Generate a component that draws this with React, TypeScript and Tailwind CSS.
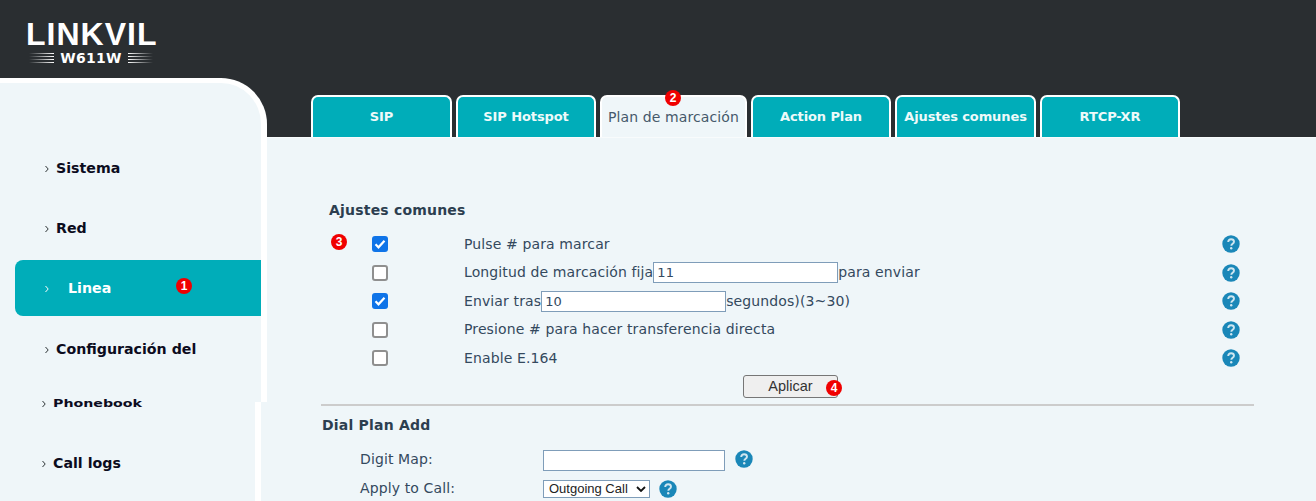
import React from 'react';

const font = 'font-["DejaVu_Sans",sans-serif]';

const Badge = ({ n, className }: { n: number; className: string }) => (
  <span className={`absolute z-10 flex h-[16px] w-[16px] items-center justify-center rounded-full bg-[#f00000] font-["Liberation_Sans",sans-serif] text-[12px] font-bold leading-none text-white ${className}`}>
    {n}
  </span>
);

const Help = ({ className = '' }: { className?: string }) => (
  <svg viewBox="0 0 18 18" className={`h-[18px] w-[18px] ${className}`}>
    <circle cx="9" cy="9" r="8.7" fill="#1a87b8" />
    <path d="M6.2 7c0-1.8 1.2-2.8 2.9-2.8S12 5.200 12 6.700c0 2-2.700 2.100-2.700 4" fill="none" stroke="#cfe6f0" strokeWidth="1.900" />
    <circle cx="9.200" cy="13.300" r="1.200" fill="#cfe6f0" />
  </svg>
);

const Chevron = ({ className = 'text-[#2d3436]' }: { className?: string }) => (
  <svg viewBox="0 0 6 8" className={`h-[8px] w-[6px] shrink-0 ${className}`}>
    <path d="M1.500 1l2.700 3-2.700 3" fill="none" stroke="currentColor" strokeWidth="1" />
  </svg>
);

const NavItem = ({ label, className = '' }: { label: string; className?: string }) => (
  <div className={`flex h-[60px] items-center gap-[6px] pl-[44px] text-[14.200px] font-bold text-[#0c0c1e] ${className}`}>
    <Chevron />
    <span>{label}</span>
  </div>
);

const tabs = [
  { label: 'SIP', w: 'w-[141px]' },
  { label: 'SIP Hotspot', w: 'w-[140px]' },
  { label: 'Plan de marcación', w: 'w-[147px]', active: true },
  { label: 'Action Plan', w: 'w-[140px]' },
  { label: 'Ajustes comunes', w: 'w-[141px]' },
  { label: 'RTCP-XR', w: 'w-[140px]' },
];

const Check = ({ on }: { on?: boolean }) =>
  on ? (
    <span className="flex h-[16px] w-[16px] items-center justify-center rounded-[3px] bg-[#0f74e8]">
      <svg viewBox="0 0 16 16" className="h-[16px] w-[16px]">
        <path d="M3.500 8.300l3 3 6-6.500" fill="none" stroke="#fff" strokeWidth="2.200" />
      </svg>
    </span>
  ) : (
    <span className="block h-[16px] w-[16px] rounded-[3px] border-2 border-[#8f8f8f] bg-white" />
  );

const TextBox = ({ value = '', className = 'w-[185px]' }: { value?: string; className?: string }) => (
  <input
    readOnly
    value={value}
    className={`h-[21px] border border-[#7f9db9] bg-white pl-[3px] font-["DejaVu_Sans",sans-serif] text-[13px] text-[#34495e] outline-none ${className}`}
  />
);

const rows: { on?: boolean; content: React.ReactNode }[] = [
  { on: true, content: 'Pulse # para marcar' },
  {
    content: (
      <>
        Longitud de marcación fija
        <TextBox value="11" />
        para enviar
      </>
    ),
  },
  {
    on: true,
    content: (
      <>
        Enviar tras
        <TextBox value="10" />
        segundos)(3~30)
      </>
    ),
  },
  { content: 'Presione # para hacer transferencia directa' },
  { content: 'Enable E.164' },
];

export default function App() {
  return (
    <div className={`relative flex h-[501px] w-[1316px] overflow-hidden bg-[#2a2e31] ${font}`}>
      {/* Left column: logo and side menu */}
      <div className="flex w-[267px] shrink-0 flex-col">
        <div className="flex h-[78px] flex-col items-start pl-[26px] pt-[19px]">
          <div className='w-[130px] whitespace-nowrap font-["Liberation_Sans",sans-serif] text-[32px] font-bold leading-[30px] tracking-[1px] text-white'>
            LINKVIL
          </div>
          <div className="mt-[1px] flex w-[130px] items-center justify-center gap-[6px]">
            <Stripes dir="r" />
            <span className="text-[14px] font-bold leading-[16px] tracking-[0.300px] text-white">W611W</span>
            <Stripes dir="l" />
          </div>
        </div>

        <div className="h-[324px] overflow-hidden rounded-tr-[46px] border-r-[6px] border-t-[5px] border-white bg-[#eff6f9] pt-[56px]">
          <NavItem label="Sistema" />
          <NavItem label="Red" />
          <div className="my-[1px] ml-[15px] flex h-[56px] items-center rounded-l-[8px] bg-[#00adb9] pl-[29px] pt-[1px] text-[14.200px] font-bold text-white">
            <Chevron className="text-white" />
            <span className="ml-[18px]">Linea</span>
          </div>
          <NavItem label="Configuración del" className="mt-[4px]" />
        </div>

        <div className="flex-1 bg-[#eff6f9]">
          <div className="flex h-full w-[261px] flex-col border-r-[6px] border-white">
            <div className="-mt-[8px] flex h-[20px] items-center gap-[6px] pl-[41px] text-[14.200px] font-bold text-[#0c0c1e]">
              <Chevron />
              <span className="scale-y-[0.8]">Phonebook</span>
            </div>
            <div className="mt-[20px] flex h-[60px] items-center gap-[6px] pl-[41px] text-[14.200px] font-bold text-[#0c0c1e]">
              <Chevron />
              <span>Call logs</span>
            </div>
          </div>
        </div>
      </div>

      {/* Right column: tabs and settings */}
      <div className="flex min-w-0 flex-1 flex-col">
        <div className="flex h-[137px] items-end gap-[4px] pl-[44px]">
          {tabs.map((t) => (
            <div
              key={t.label}
              className={`flex h-[42px] items-center justify-center rounded-t-[7px] border-2 border-b-0 border-white ${t.w} ${
                t.active
                  ? 'bg-[#eff6f9] text-[14px] tracking-[0.100px] text-[#46596b]'
                  : 'bg-[#00adb9] text-[13px] font-bold tracking-[-0.100px] text-[#eefafa]'
              }`}
            >
              <span className="whitespace-nowrap">{t.label}</span>
            </div>
          ))}
        </div>

        <div className="flex-1 border-t border-[#f8fbfc] bg-[#eff6f9] pl-[54px] text-[14px] tracking-[0.120px] text-[#34495e]">
          <div className="ml-[8px] mt-[64px] text-[14px] font-bold leading-[17px] tracking-[0.200px] text-[#2c3e50]">
            Ajustes comunes
          </div>

          <div className="mt-[11px] w-[933px]">
            {rows.map((r, i) => (
              <div key={i} className="flex h-[28.500px] items-center">
                <div className="ml-[51px] w-[92px]">
                  <Check on={r.on} />
                </div>
                <div className="flex flex-1 items-center">{r.content}</div>
                <Help className="mr-[14px]" />
              </div>
            ))}
          </div>

          <div className="mt-[2px] flex w-[933px] justify-center pl-[6px]">
            <button className='h-[23px] w-[95px] rounded-[3px] border border-[#767676] bg-[#efefef] font-["Liberation_Sans",sans-serif] text-[14.500px] tracking-normal text-[#333]'>
              Aplicar
            </button>
          </div>

          <div className="mt-[6px] h-[2px] w-[933px] bg-[#cccccc]" />

          <div className="ml-[1px] mt-[11px] text-[14px] font-bold leading-[17px] tracking-[0.200px] text-[#2c3e50]">Dial Plan Add</div>

          <div className="mt-[16px] flex h-[21px] items-center">
            <span className="ml-[39px] w-[183px] pb-[2px]">Digit Map:</span>
            <TextBox className="w-[182px]" />
            <Help className="-mt-[3px] ml-[10px]" />
          </div>
          <div className="mt-[9px] flex h-[18px] items-center">
            <span className="ml-[39px] w-[183px]">Apply to Call:</span>
            <span className="flex h-[18px] w-[107px] items-center justify-between border border-[#7f9db9] bg-white pl-[5px] pr-[3px] font-['Liberation_Sans',sans-serif] text-[13px] tracking-normal text-[#222]">
              Outgoing Call
              <svg viewBox="0 0 10 6" className="h-[6px] w-[10px]">
                <path d="M1 1l4 4 4-4" fill="none" stroke="#111" strokeWidth="1.800" />
              </svg>
            </span>
            <Help className="ml-[9px]" />
          </div>
        </div>
      </div>

      <Badge n={1} className="left-[176px] top-[278px]" />
      <Badge n={2} className="left-[665px] top-[90px]" />
      <Badge n={3} className="left-[331px] top-[234px]" />
      <Badge n={4} className="left-[826px] top-[380px]" />
    </div>
  );
}

function Stripes({ dir }: { dir: 'l' | 'r' }) {
  const bar = dir === 'r' ? 'bg-gradient-to-r' : 'bg-gradient-to-l';
  return (
    <div className="flex w-[25px] flex-col gap-[2px]">
      <div className={`h-[1px] from-transparent to-white ${bar}`} />
      <div className={`h-[1px] from-transparent to-white ${bar}`} />
      <div className={`h-[1px] from-transparent to-white ${bar}`} />
      <div className={`h-[1px] from-transparent to-white ${bar}`} />
    </div>
  );
}
